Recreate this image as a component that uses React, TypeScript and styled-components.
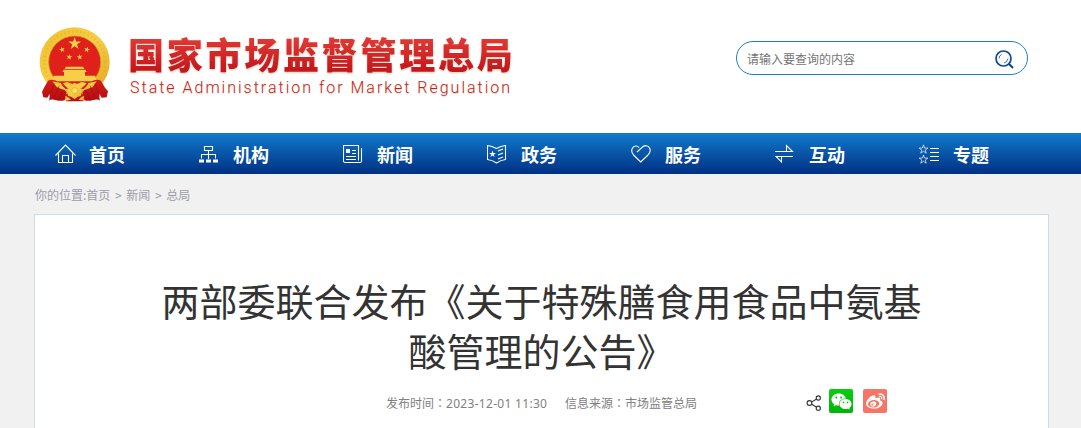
import React from 'react';
import styled, { createGlobalStyle } from 'styled-components';
import { AiFillWechat } from 'react-icons/ai';
import { FaWeibo } from 'react-icons/fa';

const STAR =
  'M0 -10 L2.3 -3.1 L9.5 -3.1 L3.7 1.2 L5.9 8.1 L0 3.9 L-5.9 8.1 L-3.7 1.2 L-9.5 -3.1 L-2.3 -3.1 Z';

const Emblem = () => (
  <EmblemSvg viewBox="0 0 270 270">
    <defs>
      <linearGradient id="gold" x1="0" y1="0" x2="1" y2="1">
        <stop offset="0" stopColor="#f0c02c" />
        <stop offset="0.5" stopColor="#f6cf48" />
        <stop offset="1" stopColor="#e0a41c" />
      </linearGradient>
      <linearGradient id="cloth" x1="0" y1="0" x2="0" y2="1">
        <stop offset="0" stopColor="#d81c1a" />
        <stop offset="1" stopColor="#b30d12" />
      </linearGradient>
    </defs>
    <ellipse cx="134" cy="126" rx="105" ry="104" fill="url(#gold)" />
    <circle
      cx="134"
      cy="126"
      r="91"
      fill="none"
      stroke="#dca01d"
      strokeWidth="9"
      strokeDasharray="5 7"
      opacity="0.3"
    />
    <circle cx="134" cy="126" r="78" fill="#e0201b" stroke="#d2951a" strokeWidth="2" />
    <g fill="#f7ce49">
      <path d={STAR} transform="translate(134 71) scale(2)" />
      <path d={STAR} transform="translate(96 89) rotate(-15) scale(0.95)" />
      <path d={STAR} transform="translate(171 89) rotate(15) scale(0.95)" />
      <path d={STAR} transform="translate(118 111) rotate(10) scale(0.95)" />
      <path d={STAR} transform="translate(149 111) rotate(-10) scale(0.95)" />
      <path d="M108 140H159L163 147H104Z" />
      <path d="M101 149H166L170 156H97Z" />
      <path d="M102 156H165V167H196L199 184H67L71 167H102Z" />
    </g>
    <path
      d="M54 182C70 174 89 184 96 202L110 216L104 241C83 247 68 232 58 242L59 221L52 233L40 232L36 216L42 203Z"
      fill="url(#cloth)"
    />
    <path
      d="M213 182C197 174 178 184 171 202L157 216L163 241C184 247 199 232 209 242L208 221L215 233L230 232L234 214L225 203Z"
      fill="url(#cloth)"
    />
    <path d="M104 226L134 208L164 226L160 244H108Z" fill="url(#cloth)" />
    <path
      d="M67 184L95 190L112 186L134 195L155 186L173 190L200 184L188 201L171 208L134 215L96 208L80 201Z"
      fill="url(#gold)"
    />
    <path d="M95 189C104 206 116 211 134 214C152 211 164 206 173 189" fill="none" stroke="#d71e1a" strokeWidth="5" />
    <path
      d="M134 188L147 196L151 205L163 209L155 216L153 227L142 231L134 238L125 231L114 227L112 216L104 209L116 205L120 196Z"
      fill="url(#gold)"
    />
    <circle cx="134" cy="212" r="9" fill="#f8dd6a" stroke="#e0a52c" strokeWidth="2" />
    <path d="M106 227Q117 232 123 239L107 242Z M162 227Q151 232 145 239L161 242Z" fill="url(#gold)" />
    <path
      d="M72 190L61 221M88 197L72 232M99 210L87 240M195 190L206 221M180 197L195 232M168 210L180 240"
      fill="none"
      stroke="#8e0910"
      strokeWidth="3"
      opacity="0.5"
    />
  </EmblemSvg>
);

const NAV = [
  {
    label: '首页',
    icon: <path d="M0.500 11.500L10.500 1L20.500 11.500M3.500 9.500V18.500H17.500V9.500M7.500 18V11.500H13.500V18" />,
  },
  {
    label: '机构',
    icon: (
      <g transform="translate(-1 0)">
        <path d="M6.500 2.500H14.500V6.500H6.500ZM10.500 7V12.500M3.500 14.500V10.500H17.500V14.500M10.500 12V15" />
        <path d="M1 17H6M8 17H13M15 17H20" strokeWidth="3" />
      </g>
    ),
  },
  {
    label: '新闻',
    icon: (
      <g transform="translate(-1 0)">
        <path d="M1.500 1.500H16.500V16.500M1.500 1V17Q1.500 18.500 3 18.500H18Q19.500 18.500 19.500 17V4M10 6.500H14M10 9.500H14M4 12.500H14M4 15.500H14" />
        <path d="M4 5H8V9H4Z" fill="#fff" stroke="none" />
      </g>
    ),
  },
  {
    label: '政务',
    icon: (
      <g transform="translate(-1 0)">
        <path d="M1.500 1.500Q6 2 10.500 4.500Q15 2 19.500 1.500V15.500Q15 16 10.500 19Q6 16 1.500 15.500ZM12 7L17 5M12 11L17 9M12 15L17 13" />
        <path d={STAR} transform="translate(6.500 10) scale(0.36)" fill="#fff" stroke="none" />
      </g>
    ),
  },
  {
    label: '服务',
    icon: (
      <path d="M6 8L10.500 3.800C13.500 0.800 17 1 18.700 4.200C20.200 7 18.500 9.500 16.500 11.500L9.700 18L3 11.500C0.700 9.200 0 6.800 1.400 4.200C2.900 1.400 6 1.500 8 3.500" />
    ),
  },
  { label: '互动', icon: <path d="M0 7.500H17.500L11.500 1.500V7M18 12.500H1L6.500 18V13" /> },
  {
    label: '专题',
    icon: (
      <>
        <path d="M11 4.500H20M11 12.500H20M11 16.500H20M11 8.500H20" />
        <path d={STAR} transform="translate(4.500 5.500) scale(0.46)" strokeWidth="1.900" opacity="0.8" />
        <path d={STAR} transform="translate(4.500 15.500) scale(0.46)" strokeWidth="1.900" opacity="0.8" />
      </>
    ),
  },
];

const App = () => {
  return (
    <>
      <GlobalStyle />
      <Header>
        <Emblem />
        <Brand>
          <BrandName>国家市场监督管理总局</BrandName>
          <BrandSub>State Administration for Market Regulation</BrandSub>
        </Brand>
        <SearchBox>
          <SearchInput placeholder="请输入要查询的内容" />
          <SearchIcon viewBox="0 0 20 20">
            <circle cx="8.500" cy="8.500" r="7.500" strokeWidth="1.700" />
            <path d="M14 14L18 18" strokeWidth="2.200" />
            <path d="M4 8.500Q4.200 5.500 6.500 4.500M13 8.500Q12.500 12 9 13" strokeWidth="0.800" />
          </SearchIcon>
        </SearchBox>
      </Header>
      <Nav>
        {NAV.map((item) => (
          <NavItem key={item.label}>
            <NavIcon viewBox="0 0 21 20">{item.icon}</NavIcon>
            <span>{item.label}</span>
          </NavItem>
        ))}
      </Nav>
      <Breadcrumb>
        <span>你的位置:首页</span>
        <Arrow>&gt;</Arrow>
        <span>新闻</span>
        <Arrow>&gt;</Arrow>
        <span>总局</span>
      </Breadcrumb>
      <Article>
        <Title>
          两部委联合发布《关于特殊膳食用食品中氨基
          <br />
          酸管理的公告》
        </Title>
        <Meta>
          <MetaText $width={179}>
            发布时间<Colon>：</Colon>
            <Time>2023-12-01 11:30</Time>
          </MetaText>
          <MetaText $width={249}>
            信息来源<Colon>：</Colon>市场监管总局
          </MetaText>
          <ShareIcon viewBox="0 0 16 16">
            <circle cx="3.500" cy="8" r="2.400" />
            <circle cx="12.300" cy="3" r="2.100" />
            <circle cx="12.300" cy="13.200" r="2.100" />
            <path d="M5.700 6.900L10.300 4.200M5.600 9.200L10.300 12" />
          </ShareIcon>
          <ShareButton $color="linear-gradient(#05d010, #02b30a)" $size={23}>
            <AiFillWechat />
          </ShareButton>
          <ShareButton $color="#f57667" $size={19}>
            <FaWeibo />
          </ShareButton>
        </Meta>
      </Article>
    </>
  );
};

const GlobalStyle = createGlobalStyle`
  * {
    box-sizing: border-box;
  }

  body {
    margin: 0;
    background: #f1f1f1;
    font-family: 'Noto Sans CJK SC', sans-serif;
  }
`;

const Header = styled.header`
  height: 133px;
  display: flex;
  align-items: flex-start;
  padding: 20px 53px 0 30px;
  background: #fff;
`;

const EmblemSvg = styled.svg`
  width: 90px;
  height: 90px;
  flex: none;
`;

const Brand = styled.div`
  width: 400px;
  padding: 10px 0 0 8px;
  white-space: nowrap;
`;

const BrandName = styled.div`
  height: 48px;
  line-height: 47px;
  font-size: 36px;
  font-weight: 900;
  letter-spacing: 2.75px;
  color: transparent;
  background: linear-gradient(#e23a36 15%, #c4161b 85%);
  background-clip: text;
  -webkit-background-clip: text;
  filter: drop-shadow(0 1px 1px rgba(190, 130, 80, 0.4));
`;

const BrandSub = styled.div`
  padding-left: 2px;
  line-height: 20px;
  font-family: Roboto, 'Liberation Sans', sans-serif;
  font-size: 16px;
  font-weight: 300;
  letter-spacing: 2px;
  color: #c91f20;
  text-shadow: 0 1px 1px rgba(190, 130, 80, 0.35);
`;

const SearchBox = styled.div`
  width: 292px;
  height: 34px;
  display: flex;
  align-items: center;
  margin: 21px 0 0 auto;
  padding: 0 12px 0 10px;
  border: 1px solid #1b7fcc;
  border-radius: 17px;
`;

const SearchInput = styled.input`
  flex: 1;
  min-width: 0;
  padding: 0;
  border: 0;
  outline: 0;
  background: none;
  font-family: inherit;
  font-size: 12px;

  &::placeholder {
    color: #757575;
  }
`;

const SearchIcon = styled.svg`
  width: 20px;
  height: 20px;
  margin-top: 4px;
  fill: none;
  stroke: #0e4793;
`;

const Nav = styled.nav`
  height: 41px;
  display: flex;
  padding-left: 55px;
  background: linear-gradient(#117acb, #003083);
`;

const NavItem = styled.div`
  width: 144px;
  display: flex;
  align-items: center;
  gap: 13px;
  color: #fff;
  font-size: 18px;
  font-weight: bold;
`;

const NavIcon = styled.svg`
  width: 21px;
  height: 20px;
  margin-top: 1px;
  fill: none;
  stroke: #fff;
  stroke-width: 1.1;
`;

const Breadcrumb = styled.div`
  height: 40px;
  display: flex;
  align-items: center;
  padding: 0 0 0 35px;
  font-size: 12px;
  color: #9a9ea8;
`;

const Arrow = styled.span`
  width: 16px;
  text-align: center;
`;

const Article = styled.main`
  width: 1015px;
  height: 214px;
  margin-left: 34px;
  padding-top: 60px;
  background: #fff;
  border: 1px solid #d0dbe8;
  border-bottom: 0;
`;

const Title = styled.h1`
  margin: 0;
  font-size: 38px;
  font-weight: 400;
  line-height: 50px;
  text-align: center;
  color: #333;
`;

const Meta = styled.div`
  display: flex;
  align-items: center;
  margin-top: 14px;
  padding-left: 351px;
  font-size: 12px;
  color: #808080;
`;

const MetaText = styled.div<{ $width: number }>`
  width: ${({ $width }) => $width}px;
  height: 24px;
  line-height: 27px;
  flex: none;
  white-space: nowrap;
`;

const Colon = styled.span`
  font-family: 'Noto Sans CJK TC', sans-serif;
`;

const Time = styled.span`
  font-family: 'Noto Sans', sans-serif;
  letter-spacing: 0.3px;
`;

const ShareIcon = styled.svg`
  width: 16px;
  height: 16px;
  margin-right: 7px;
  margin-left: -8px;
  margin-top: 3px;
  fill: none;
  stroke: #333;
  stroke-width: 1.1;
`;

const ShareButton = styled.span<{ $color: string; $size: number }>`
  width: 24px;
  height: 24px;
  display: flex;
  align-items: center;
  justify-content: center;
  margin-right: 10px;
  border-radius: 2px;
  background: ${({ $color }) => $color};
  color: #fff;
  font-size: ${({ $size }) => $size}px;
`;

export default App;
